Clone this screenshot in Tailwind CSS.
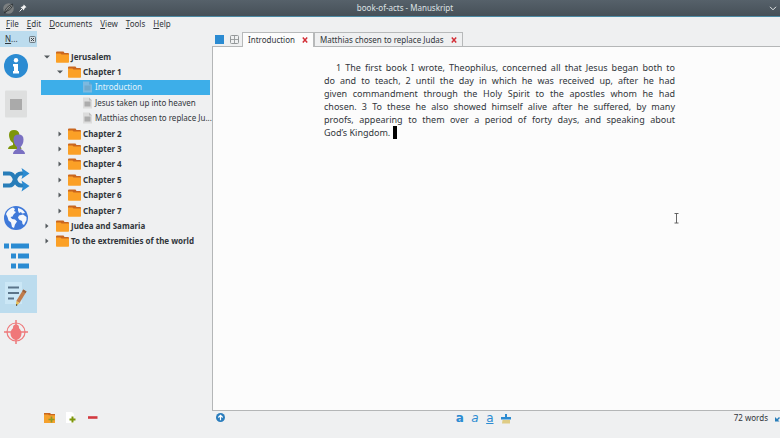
<!DOCTYPE html>
<html lang="en">
<head>
<meta charset="utf-8">
<meta name="viewport" content="width=device-width, initial-scale=1">
<title>book-of-acts - Manuskript</title>
<script src="https://cdn.jsdelivr.net/npm/@tailwindcss/browser@4"></script>
</head>
<body class="flex h-screen flex-col overflow-hidden bg-[#eff0f1] font-['Noto_Sans',sans-serif] text-[8px] leading-[14px] text-[#31363b]">
<svg class="hidden" aria-hidden="true">
  <symbol id="folder" viewBox="0 0 13 12"><path d="M0 1.5Q0 .5 1 .5h6.500l1 1.500H12q1 0 1 1V7H0z" fill="#c9661f"/><path d="M0 2.500h4.500l1 1H13v7.500q0 .7-.7.7H.7q-.7 0-.7-.7z" fill="#fba026"/></symbol>
  <symbol id="page" viewBox="0 0 9 12"><path d="M0 .5h6l3 3v8H0z" fill="#dcdcdc"/><path d="M6 .5l3 3H6z" fill="#bdbdbd"/><path d="M1.500 4.500h6v5h-6z" fill="#acacac"/></symbol>
  <symbol id="page-selected" viewBox="0 0 9 12"><path d="M0 .5h6l3 3v8H0z" fill="#7cb9e0"/><path d="M6 .5l3 3H6z" fill="#5fa5d2"/><path d="M1.500 4.500h6v5h-6z" fill="#70a9cc"/></symbol>
  <symbol id="right" viewBox="0 0 6 6"><path d="M1.500 .5L4.500 3 1.500 5.500z" fill="#555a5e"/></symbol>
  <symbol id="down" viewBox="0 0 6 6"><path d="M0 1.500h6L3 4.500z" fill="#555a5e"/></symbol>
  <symbol id="cross" viewBox="0 0 6 6"><path d="M.8 .6l4.400 4.800M5.200 .6L.8 5.400" stroke="#d32f37" stroke-width="1.500" fill="none"/></symbol>
</svg>

<header class="flex h-[17px] shrink-0 items-center border-b border-[#4d8ba5] bg-linear-to-b from-[#56616a] to-[#465058] px-[3px] text-[#dfe3e5]">
  <div class="flex flex-1 items-center gap-[5px]">
    <svg class="size-[11px]" viewBox="0 0 11 11"><circle cx="5.500" cy="5.500" r="5.300" fill="#7b7f80"/><path d="M1.500 10Q2 4 9.500 1Q9.500 6 4 8z" fill="#8d908f" stroke="#282d30" stroke-width=".8"/><path d="M1.500 10L8 3" stroke="#282d30" stroke-width=".8"/></svg>
    <svg class="size-[8px]" viewBox="0 0 8 8"><path d="M4.800.5l2.700 2.700-1 .3-1.300 1.500-.2 1.500L1.500 3l1.500-.2L4.500 1.500z" fill="#f4f5f5"/><path d="M3 5L.6 7.400" stroke="#f4f5f5"/></svg>
  </div>
  <h1 class="pl-[30px]">book-of-acts - Manuskript</h1>
  <div class="flex flex-1 justify-end">
    <button aria-label="Minimize"><svg class="h-[5px] w-[8px]" viewBox="0 0 8 5"><path d="M1 .8l3 3 3-3" fill="none" stroke="#e6e9ea"/></svg></button>
  </div>
</header>

<nav class="flex h-[14px] shrink-0 items-center gap-[8px] px-[6px]" aria-label="Menu">
  <button><u>F</u>ile</button>
  <button><u>E</u>dit</button>
  <button><u>D</u>ocuments</button>
  <button><u>V</u>iew</button>
  <button><u>T</u>ools</button>
  <button><u>H</u>elp</button>
</nav>

<div class="flex min-h-0 flex-1">
  <aside class="w-[37px] shrink-0">
    <div class="flex h-[16px] items-center justify-between bg-[#bcdcee] pr-px pl-[5px]">
      <span><u>N</u>...</span>
      <button aria-label="Close navigation"><svg class="size-[7px]" viewBox="0 0 7 7"><rect x=".5" y=".5" width="6" height="6" rx="1" fill="#d2dce2" stroke="#59656c" stroke-width=".8"/><path d="M2 2l3 3M5 2L2 5" stroke="#3e474d"/></svg></button>
    </div>
    <div class="flex flex-col">
      <button class="flex h-[38px] w-full items-center pl-[4px]" aria-label="General"><svg class="size-6" viewBox="0 0 24 24"><circle cx="12" cy="12" r="12" fill="#2b8bd2"/><circle cx="12" cy="6.300" r="2.200" fill="#fff"/><path d="M9 10h5v7h1v2.500H9V17h1v-4.500H9z" fill="#fff"/></svg></button>
      <button class="flex h-[38px] w-full items-center pl-[4px]" aria-label="Summary"><svg class="h-[28px] w-6" viewBox="0 0 24 28"><rect x="1" y=".5" width="22" height="27" rx="1" fill="#dedfdf"/><rect x="6" y="9" width="12" height="11" fill="#aaa"/></svg></button>
      <button class="flex h-[38px] w-full items-center pl-[4px]" aria-label="Characters"><svg class="size-6" viewBox="0 0 24 24"><path d="M4 19q0-3 5-4V13Q5 10 5 5Q5 0 10 0t5.500 5q0 5-3 8v2q5 1 5 4z" fill="#7d960b"/><path d="M9 24q0-3 4-5v-2Q9.500 14 9.500 9.500q0-5 5-5t5 5q0 4.500-3 7.500v2q4.500 2 4.500 5z" fill="#7a70c2"/></svg></button>
      <button class="flex h-[38px] w-full items-center pl-[3px]" aria-label="Plots"><svg class="h-[24px] w-[27px]" viewBox="0 0 27 24"><path d="M0 5.500h6.500Q10 5.500 12 11.500t6 6h4M0 17.500h6.500q3.500 0 5.500-6t6-6h4" fill="none" stroke="#277db9" stroke-width="4.200"/><path d="M18.500 0L26.500 5.500L18.500 11L20 5.500zM18.500 12.500L26.500 18L18.500 23.500L20 18z" fill="#2b8bd2"/></svg></button>
      <button class="flex h-[38px] w-full items-center pl-[4px]" aria-label="World"><svg class="size-6" viewBox="0 0 24 24"><circle cx="12" cy="12" r="12" fill="#3f79d9"/><path d="M2 8Q4 3 9 1.500l2 1.500-1 2 2 1-2.500 2.500-1 2-2 .5 1.500 2 3 .5 2 2-2 3-1 3.500-2-1-1-4.500-2.500-2-1-3.500zM14 2q5 1 7 5l-3 .5-1-1.500-2 1-1-2.500zM15 9.500l4-1 3.500 2.500v3L20 19l-1.500-1-.5-3-3-1.500-1-2z" fill="#f5f8fc"/></svg></button>
      <button class="flex h-[38px] w-full items-center pl-[4px]" aria-label="Outline"><svg class="h-[26px] w-[25px]" viewBox="0 0 25 26" fill="#2b8bd2"><path d="M0 .5h5v5H0zM7 .5h18v5H7zM7 10.500h5v5H7zM14 10.500h11v5H14zM7 20.500h5v5H7zM14 20.500h11v5H14z"/></svg></button>
      <button class="flex h-[38px] w-full items-center bg-[#bcdcee] pl-[5px]" aria-label="Editor"><svg class="h-[26px] w-[23px]" viewBox="0 0 23 26"><rect x="0" y="1" width="17" height="22" fill="#cbe7f6"/><path d="M3 6.500h11M3 12h11M3 17.500h6" stroke="#5a7489" stroke-width="2"/><path d="M18.300 8.500l3.200 2L14.500 22l-3.200-2z" fill="#bf7b4b"/><path d="M18.300 8.500l3.200 2-1 1.800-3.200-2z" fill="#99613d"/><path d="M11.300 20l3.200 2-3.500 3z" fill="#e8bd50"/><path d="M11 25l.1-2 1.500 1z" fill="#333"/></svg></button>
      <button class="flex h-[38px] w-full items-center pl-[4px]" aria-label="Debug"><svg class="size-6" viewBox="0 0 24 24"><g fill="none" stroke="#ee797b"><circle cx="12" cy="12" r="9" stroke-width="1.200"/><path d="M12 0v24M0 12h24" stroke-width="1.500"/></g><ellipse cx="12" cy="13.500" rx="5.500" ry="6.500" fill="#f07779"/><circle cx="12" cy="7.500" r="3" fill="#ee797b"/></svg></button>
    </div>
  </aside>

  <section class="flex w-[175px] shrink-0 flex-col pt-[18px] pr-[2px] pl-[4px]" aria-label="Documents">
    <ul class="grid h-[200px] shrink-0 auto-rows-fr grid-cols-1 font-bold" role="tree">
      <li role="treeitem" aria-expanded="true" class="flex items-center pl-[3px]"><svg class="size-[6px]"><use href="#down"/></svg><svg class="mr-[2px] ml-[6px] h-[12px] w-[13px]"><use href="#folder"/></svg>Jerusalem</li>
      <li role="treeitem" aria-expanded="true" class="flex items-center pl-[16px]"><svg class="size-[6px]"><use href="#down"/></svg><svg class="mr-[2px] ml-[5px] h-[12px] w-[13px]"><use href="#folder"/></svg>Chapter 1</li>
      <li role="treeitem" aria-selected="true" class="flex items-center bg-[#3daee9] pl-[42px] font-normal text-[#e3f3fb]"><svg class="mr-[3px] h-[12px] w-[9px] shrink-0"><use href="#page-selected"/></svg>Introduction</li>
      <li role="treeitem" class="flex items-center pl-[42px] font-normal"><svg class="mr-[3px] h-[12px] w-[9px] shrink-0"><use href="#page"/></svg>Jesus taken up into heaven</li>
      <li role="treeitem" class="flex items-center pl-[42px] font-normal whitespace-nowrap"><svg class="mr-[3px] h-[12px] w-[9px] shrink-0"><use href="#page"/></svg>Matthias chosen to replace Ju...</li>
      <li role="treeitem" aria-expanded="false" class="flex items-center pl-[16px]"><svg class="size-[6px]"><use href="#right"/></svg><svg class="mr-[2px] ml-[5px] h-[12px] w-[13px]"><use href="#folder"/></svg>Chapter 2</li>
      <li role="treeitem" aria-expanded="false" class="flex items-center pl-[16px]"><svg class="size-[6px]"><use href="#right"/></svg><svg class="mr-[2px] ml-[5px] h-[12px] w-[13px]"><use href="#folder"/></svg>Chapter 3</li>
      <li role="treeitem" aria-expanded="false" class="flex items-center pl-[16px]"><svg class="size-[6px]"><use href="#right"/></svg><svg class="mr-[2px] ml-[5px] h-[12px] w-[13px]"><use href="#folder"/></svg>Chapter 4</li>
      <li role="treeitem" aria-expanded="false" class="flex items-center pl-[16px]"><svg class="size-[6px]"><use href="#right"/></svg><svg class="mr-[2px] ml-[5px] h-[12px] w-[13px]"><use href="#folder"/></svg>Chapter 5</li>
      <li role="treeitem" aria-expanded="false" class="flex items-center pl-[16px]"><svg class="size-[6px]"><use href="#right"/></svg><svg class="mr-[2px] ml-[5px] h-[12px] w-[13px]"><use href="#folder"/></svg>Chapter 6</li>
      <li role="treeitem" aria-expanded="false" class="flex items-center pl-[16px]"><svg class="size-[6px]"><use href="#right"/></svg><svg class="mr-[2px] ml-[5px] h-[12px] w-[13px]"><use href="#folder"/></svg>Chapter 7</li>
      <li role="treeitem" aria-expanded="false" class="flex items-center pl-[3px]"><svg class="size-[6px]"><use href="#right"/></svg><svg class="mr-[2px] ml-[6px] h-[12px] w-[13px]"><use href="#folder"/></svg>Judea and Samaria</li>
      <li role="treeitem" aria-expanded="false" class="flex items-center pl-[3px]"><svg class="size-[6px]"><use href="#right"/></svg><svg class="mr-[2px] ml-[6px] h-[12px] w-[13px]"><use href="#folder"/></svg>To the extremities of the world</li>
    </ul>
    <div class="mt-auto flex h-[28px] items-start gap-[11px] pt-[2px] pl-[3px]">
      <button aria-label="Add folder"><svg class="size-[11px]" viewBox="0 0 11 11"><path d="M0 1h6l1 1h4v9H0z" fill="#c9661f"/><path d="M0 2.500h4l1 .7h6V11H0z" fill="#f5a12d"/><path d="M7.500 4.500v6M4.500 7.500h6" stroke="#8f9a26" stroke-width="1.700"/></svg></button>
      <button aria-label="Add text"><svg class="size-[11px]" viewBox="0 0 11 11"><path d="M0 0h6l2 2v9H0z" fill="#fff"/><path d="M6.500 4.500v6M3.500 7.500h6" stroke="#7d960b" stroke-width="2"/></svg></button>
      <button aria-label="Remove"><svg class="h-[11px] w-[10px]" viewBox="0 0 10 11"><path d="M0 5.500h9.500" stroke="#d23a40" stroke-width="2.600"/></svg></button>
    </div>
  </section>

  <main class="flex min-w-0 flex-1 flex-col">
    <div class="flex h-[15px] shrink-0 items-end">
      <div class="flex h-[14px] w-[30px] items-center gap-[6px] pl-[3px]">
        <button aria-label="Text view"><svg class="size-[9px]" viewBox="0 0 9 9"><path d="M0 0h9v9H0z" fill="#2b8bd2"/></svg></button>
        <button aria-label="Split view"><svg class="size-[9px]" viewBox="0 0 9 9" fill="none" stroke="#94989a"><rect x=".5" y=".5" width="8" height="8" rx="1"/><path d="M4.500 1v7M1 4.500h7" stroke-width=".9"/></svg></button>
      </div>
      <div class="z-10 -mb-px flex" role="tablist">
        <div class="flex h-[15px] items-center gap-[7px] border border-b-0 border-[#b7b9ba] bg-[#fcfcfc] px-[5px]"><button role="tab" aria-selected="true">Introduction</button><button aria-label="Close Introduction"><svg class="size-[6px]"><use href="#cross"/></svg></button></div>
        <div class="mb-px flex h-[14px] items-center gap-[7px] border border-b-0 border-[#b7b9ba] px-[5px]"><button role="tab" aria-selected="false">Matthias chosen to replace Judas</button><button aria-label="Close Matthias chosen to replace Judas"><svg class="size-[6px]"><use href="#cross"/></svg></button></div>
      </div>
    </div>
    <div class="min-h-0 flex-1 border border-r-0 border-[#b4b6b7] bg-[#fcfcfc] pt-[14px] pl-[6px]">
      <div contenteditable="true" role="textbox" aria-multiline="true" aria-label="Scene text" spellcheck="false" class="mx-auto max-w-[351px] text-[9px] leading-[13px] outline-none">
        <p class="indent-[12px] [text-align-last:justify]">1 The first book I wrote, Theophilus, concerned all that Jesus began both to<br>
        <span>do and to teach, 2 until the day in which he was received up, after he had</span><br>
        <span>given commandment through the Holy Spirit to the apostles whom he had</span><br>
        <span>chosen. 3 To these he also showed himself alive after he suffered, by many</span><br>
        <span>proofs, appearing to them over a period of forty days, and speaking about</span></p>
        <p>God’s Kingdom. <span class="inline-block h-[13px] w-[4px] bg-black align-bottom"></span></p>
      </div>
    </div>
    <footer class="flex h-[27px] shrink-0 items-start">
      <button class="ml-[4px] pt-[2px]" aria-label="Parent folder"><svg class="size-[9px]" viewBox="0 0 9 9"><circle cx="4.500" cy="4.500" r="4.500" fill="#2b7dbd"/><path d="M4.500 7.200V2.500M2.300 4.500l2.200-2.200 2.200 2.200" fill="none" stroke="#fff" stroke-width="1.200"/></svg></button>
      <div class="flex flex-1 justify-center gap-[7px] pl-[8px] font-['DejaVu_Sans',sans-serif] text-[12px] leading-[14px] text-[#2b8bd2]">
        <button class="w-[8px] font-bold" aria-label="Bold">a</button>
        <button class="w-[8px] italic" aria-label="Italic">a</button>
        <button class="w-[8px] underline" aria-label="Underline">a</button>
        <button class="pt-[2px]" aria-label="Clear formatting"><svg class="size-[10px]" viewBox="0 0 10 10"><path d="M4 0h2v3h4v2.500H0V3h4z" fill="#2b8bd2"/><path d="M1.500 6h7.500v3.500h-8z" fill="#dfcc85"/></svg></button>
      </div>
      <span>72 words</span>
      <button class="ml-[7px] pt-[4px]" aria-label="Fullscreen"><svg class="h-[7px] w-[5px]" viewBox="0 0 5 7"><path d="M0 2v4.500h4.500L3 5l2-2-1-1-2 2z" fill="#277db9"/></svg></button>
    </footer>
  </main>
</div>
<svg class="pointer-events-none absolute top-[213px] left-[673px] h-[11px] w-[7px]" viewBox="0 0 7 11" fill="none" stroke="#555" stroke-width=".9" aria-hidden="true"><path d="M1.500 .5h4M1.500 10h4M3.500 .5V10"/></svg>
</body>
</html>
